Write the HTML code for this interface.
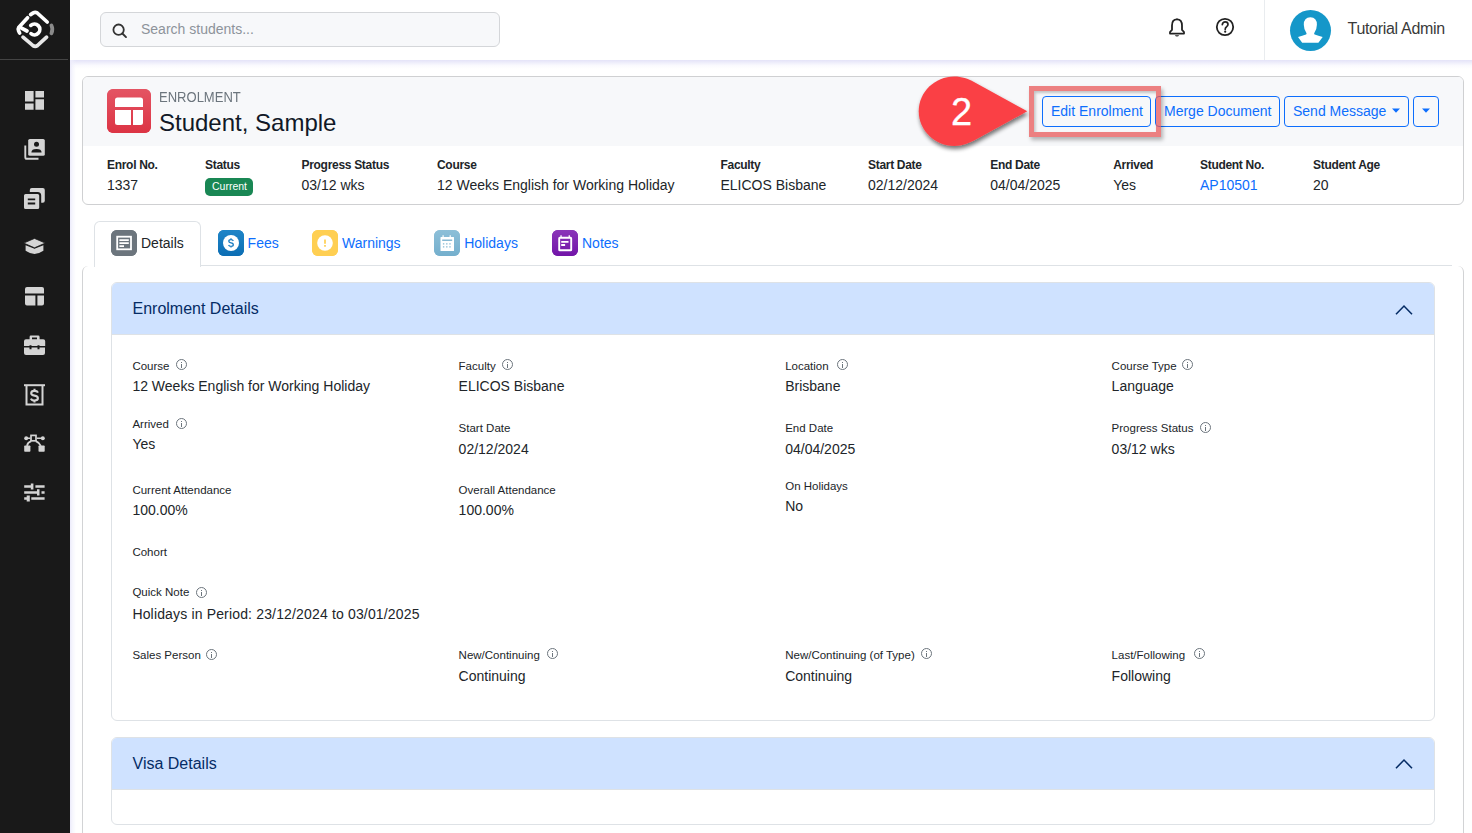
<!DOCTYPE html>
<html><head><meta charset="utf-8">
<style>
*{box-sizing:border-box;margin:0;padding:0}
html,body{width:1472px;height:833px;overflow:hidden;background:#fff;font-family:"Liberation Sans",sans-serif;color:#212529}
.a{position:absolute}
.t{position:absolute;white-space:nowrap;line-height:1}
#side{left:0;top:0;width:70px;height:833px;background:#191919}
#side .line{left:0;top:59px;width:68px;height:1px;background:#444}
#hdr{left:70px;top:0;width:1402px;height:60px;background:#fff}
#hdrshadow{left:70px;top:60px;width:1402px;height:9px;background:linear-gradient(#e4e3f8,rgba(240,240,252,0.35) 60%,rgba(255,255,255,0))}
#leftshadow{left:70px;top:60px;width:6px;height:773px;background:linear-gradient(90deg,#ecebfb,rgba(240,240,252,0.6) 40%,rgba(255,255,255,0))}
#search{left:100px;top:12px;width:400px;height:35px;border:1px solid #d4d6d9;border-radius:6px;background:#f7f8fa}
.card{border:1px solid #cfd0d2;border-radius:6px;background:#fff}
.lbl{font-size:12px;font-weight:700;letter-spacing:-0.3px;color:#212529}
.val{font-size:14px;color:#212529}
.btn{position:absolute;top:96px;height:31px;border:1px solid #0d6efd;border-radius:4px;color:#0d6efd;font-size:14px}
.tabtxt{font-size:14px;color:#0d6efd}
.ico{position:absolute;top:230px;width:26px;height:26px;border-radius:6px}
.dl{font-size:11.5px;color:#212529}
.dv{font-size:14px;color:#212529}
.info{position:absolute;width:11px;height:11px;border:1px solid #6c757d;border-radius:50%}
.info:after{content:"";position:absolute;left:4px;top:4px;width:1px;height:4px;background:#6c757d}
.info:before{content:"";position:absolute;left:4px;top:2px;width:1px;height:1px;background:#6c757d}
.acc{position:absolute;left:111px;width:1324px;border:1px solid #dee2e6;border-radius:6px;overflow:hidden;background:#fff}
.acch{position:absolute;left:0;top:0;width:100%;height:52px;background:#cfe2ff;border-bottom:1px solid #dee2e6}
</style></head><body>

<!-- sidebar -->
<div id="side" class="a"><div class="line a"></div></div>

<!-- header -->
<div id="hdr" class="a"></div>
<div id="hdrshadow" class="a"></div>
<div id="leftshadow" class="a"></div>
<div id="search" class="a"></div>
<div class="t" style="left:141px;top:22.4px;font-size:14px;color:#8d939a">Search students...</div>
<div class="a" style="left:1264px;top:0;width:1px;height:60px;background:#e9ecef"></div>
<div class="a" style="left:1289.6px;top:9.6px;width:41px;height:41px;border-radius:50%;background:#1597c9"></div>
<div class="t" style="left:1347.5px;top:20.6px;font-size:16px;letter-spacing:-0.3px;color:#3a3a3a">Tutorial Admin</div>

<!-- top card -->
<div class="card a" style="left:82px;top:76px;width:1382px;height:129px;overflow:hidden">
  <div class="a" style="left:0;top:0;width:100%;height:69px;background:#f7f8fa"></div>
</div>
<div class="a" style="left:107px;top:89px;width:44px;height:44px;border-radius:7px;background:linear-gradient(#e4505f,#dc3545)"></div>
<div class="t" style="left:159px;top:89.8px;font-size:14.4px;color:#6c757d;transform:scaleX(0.905);transform-origin:0 0">ENROLMENT</div>
<div class="t" style="left:159px;top:110.7px;font-size:24px;color:#111827">Student, Sample</div>

<div class="t lbl" style="left:107px;top:158.8px">Enrol No.</div>
<div class="t lbl" style="left:205px;top:158.8px">Status</div>
<div class="t lbl" style="left:301.5px;top:158.8px">Progress Status</div>
<div class="t lbl" style="left:437px;top:158.8px">Course</div>
<div class="t lbl" style="left:720.5px;top:158.8px">Faculty</div>
<div class="t lbl" style="left:868px;top:158.8px">Start Date</div>
<div class="t lbl" style="left:990.3px;top:158.8px">End Date</div>
<div class="t lbl" style="left:1113.2px;top:158.8px">Arrived</div>
<div class="t lbl" style="left:1200px;top:158.8px">Student No.</div>
<div class="t lbl" style="left:1313px;top:158.8px">Student Age</div>

<div class="t val" style="left:107px;top:178px">1337</div>
<div class="a" style="left:205px;top:178px;width:48px;height:18px;border-radius:5px;background:#198754"></div>
<div class="t" style="left:212px;top:181px;font-size:10.5px;color:#fff">Current</div>
<div class="t val" style="left:301.5px;top:178px">03/12 wks</div>
<div class="t val" style="left:437px;top:178px">12 Weeks English for Working Holiday</div>
<div class="t val" style="left:720.5px;top:178px">ELICOS Bisbane</div>
<div class="t val" style="left:868px;top:178px">02/12/2024</div>
<div class="t val" style="left:990.3px;top:178px">04/04/2025</div>
<div class="t val" style="left:1113.2px;top:178px">Yes</div>
<div class="t val" style="left:1200px;top:178px;color:#0d6efd">AP10501</div>
<div class="t val" style="left:1313px;top:178px">20</div>

<!-- buttons -->
<div class="btn" style="left:1042px;width:109px"></div>
<div class="t" style="left:1051px;top:104px;font-size:14px;color:#0d6efd">Edit Enrolment</div>
<div class="btn" style="left:1155px;width:125px"></div>
<div class="t" style="left:1164px;top:104px;font-size:14px;color:#0d6efd">Merge Document</div>
<div class="btn" style="left:1284px;width:125px"></div>
<div class="t" style="left:1293px;top:104px;font-size:14px;color:#0d6efd">Send Message</div>
<div class="btn" style="left:1413px;width:26px"></div>

<!-- tabs -->
<div class="a" style="left:94px;top:265px;width:1358px;height:1px;background:#dee2e6"></div>
<div class="a" style="left:82px;top:266px;width:1382px;height:600px;border:1px solid #d2d3d5;border-top:none;border-radius:6px"></div>
<div class="a" style="left:94px;top:221px;width:107px;height:46px;border:1px solid #dee2e6;border-bottom:none;border-radius:6px 6px 0 0;background:#fff"></div>
<div class="ico" style="left:111px;background:#6c757d"></div>
<div class="t" style="left:141px;top:236px;font-size:14px;color:#212529">Details</div>
<div class="ico" style="left:218px;background:#0d72b9"></div>
<div class="t tabtxt" style="left:247.6px;top:236px">Fees</div>
<div class="ico" style="left:312px;background:#ffd055"></div>
<div class="t tabtxt" style="left:342px;top:236px">Warnings</div>
<div class="ico" style="left:434px;background:#8bbdd6"></div>
<div class="t tabtxt" style="left:464.2px;top:236px">Holidays</div>
<div class="ico" style="left:552px;background:#7b27b0"></div>
<div class="t tabtxt" style="left:582px;top:236px">Notes</div>

<!-- accordion 1 -->
<div class="acc" style="top:282px;height:439px"><div class="acch"></div></div>
<div class="t" style="left:132.5px;top:300.8px;font-size:16px;color:#052c65">Enrolment Details</div>

<!-- grid -->
<div class="t dl" style="left:132.4px;top:360.67px">Course</div>
<div class="t dv" style="left:132.4px;top:378.95px">12 Weeks English for Working Holiday</div>
<div class="info" style="left:175.5px;top:359px"></div>
<div class="t dl" style="left:132.4px;top:419.07px">Arrived</div>
<div class="t dv" style="left:132.4px;top:437.15px">Yes</div>
<div class="info" style="left:175.5px;top:417.5px"></div>
<div class="t dl" style="left:132.4px;top:484.57px">Current Attendance</div>
<div class="t dv" style="left:132.4px;top:503.15px">100.00%</div>
<div class="t dl" style="left:132.4px;top:546.77px">Cohort</div>
<div class="t dl" style="left:132.4px;top:587.27px">Quick Note</div>
<div class="t dv" style="left:132.4px;top:607.25px;letter-spacing:0.16px">Holidays in Period: 23/12/2024 to 03/01/2025</div>
<div class="info" style="left:195.5px;top:586.5px"></div>
<div class="t dl" style="left:132.4px;top:650.27px">Sales Person</div>
<div class="info" style="left:205.5px;top:648.5px"></div>
<div class="t dl" style="left:458.6px;top:360.67px">Faculty</div>
<div class="t dv" style="left:458.6px;top:378.95px">ELICOS Bisbane</div>
<div class="info" style="left:502px;top:359px"></div>
<div class="t dl" style="left:458.6px;top:423.27px">Start Date</div>
<div class="t dv" style="left:458.6px;top:441.95px">02/12/2024</div>
<div class="t dl" style="left:458.6px;top:484.57px">Overall Attendance</div>
<div class="t dv" style="left:458.6px;top:503.15px">100.00%</div>
<div class="t dl" style="left:458.6px;top:650.27px">New/Continuing</div>
<div class="t dv" style="left:458.6px;top:668.75px">Continuing</div>
<div class="info" style="left:547px;top:648px"></div>
<div class="t dl" style="left:785.2px;top:360.67px">Location</div>
<div class="t dv" style="left:785.2px;top:378.95px">Brisbane</div>
<div class="info" style="left:836.5px;top:359px"></div>
<div class="t dl" style="left:785.2px;top:423.27px">End Date</div>
<div class="t dv" style="left:785.2px;top:441.95px">04/04/2025</div>
<div class="t dl" style="left:785.2px;top:481.27px">On Holidays</div>
<div class="t dv" style="left:785.2px;top:499.35px">No</div>
<div class="t dl" style="left:785.2px;top:650.27px">New/Continuing (of Type)</div>
<div class="t dv" style="left:785.2px;top:668.75px">Continuing</div>
<div class="info" style="left:921px;top:648px"></div>
<div class="t dl" style="left:1111.6px;top:360.67px">Course Type</div>
<div class="t dv" style="left:1111.6px;top:378.95px">Language</div>
<div class="info" style="left:1181.5px;top:359px"></div>
<div class="t dl" style="left:1111.6px;top:423.27px">Progress Status</div>
<div class="t dv" style="left:1111.6px;top:441.95px">03/12 wks</div>
<div class="info" style="left:1199.5px;top:421.5px"></div>
<div class="t dl" style="left:1111.6px;top:650.27px">Last/Following</div>
<div class="t dv" style="left:1111.6px;top:668.75px">Following</div>
<div class="info" style="left:1194px;top:648px"></div>

<!-- accordion 2 -->
<div class="acc" style="top:737px;height:88px"><div class="acch"></div></div>
<div class="t" style="left:132.5px;top:756px;font-size:16px;color:#052c65">Visa Details</div>


<!-- logo -->
<svg class="a" style="left:0;top:0" width="70" height="60" viewBox="0 0 70 60">
 <g fill="none" stroke-linecap="round" stroke-width="3.7">
  <path d="M30.6 14.6 L33.2 12.9 Q35.2 11.8 37.2 12.9 L47.2 22" stroke="#fff"/>
  <path d="M27.6 17.8 L18.8 27.3 Q17.6 29.3 18.6 31 L19.6 33" stroke="#fff"/>
  <path d="M23 37.2 L33 45.6 Q35.2 47.1 37.4 45.6 L46.6 37.2" stroke="#e8e8e8"/>
  <path d="M51.4 25.4 Q53.4 29.4 51.4 33.4" stroke="#8a8a8a"/>
  <path d="M20.6 27.6 L27 31" stroke="#fff"/>
  <path d="M30.8 25.4 A5.4 5.4 0 1 1 31 33.6" stroke="#fff"/>
 </g>
</svg>
<!-- sidebar icons -->
<svg class="a" style="left:0;top:60px" width="70" height="460" viewBox="0 60 70 460" fill="#d4d4d4">
 <!-- dashboard -->
 <path d="M25 91h8.6v10.6H25z M35.4 91h8.6v6.4h-8.6z M25 103.4h8.6v6.4H25z M35.4 99.2h8.6v10.6h-8.6z"/>
 <!-- contacts -->
 <path d="M29.8 139h13.4q1.6 0 1.6 1.6v13.6q0 1.6-1.6 1.6H29.8q-1.6 0-1.6-1.6V140.6q0-1.6 1.6-1.6z" />
 <circle cx="36.5" cy="144.3" r="2.5" fill="#191919"/>
 <path d="M31.4 152.4q0-3.4 5.1-3.4t5.1 3.4z" fill="#191919"/>
 <path d="M25.3 145.6v11.6q0 1.6 1.6 1.6h11.6" fill="none" stroke="#d4d4d4" stroke-width="1.9"/>
 <!-- copy -->
 <rect x="29.8" y="188" width="15" height="14.8" rx="2" fill="#d4d4d4"/>
 <rect x="23" y="193" width="17.2" height="17" rx="2.6" fill="#d4d4d4" stroke="#191919" stroke-width="2"/>
 <path d="M27.8 198.4h7.4v1.8h-7.4z M27.8 202.6h7.4v1.8h-7.4z" fill="#191919"/>
 <!-- grad cap -->
 <path d="M25.6 245.2v5.6q8.9 6.2 17.8 0v-5.6l-8.9 3.6z"/>
 <path d="M34.5 238.4l10.8 4.7-10.8 4.7-10.8-4.7z" stroke="#191919" stroke-width="0.8"/>
 <!-- table -->
 <path d="M27 287h15q2 0 2 2v4.6H25v-4.6q0-2 2-2z M25 295.6h10.4v10H27q-2 0-2-2z M37.4 295.6H44v8q0 2-2 2h-4.6z"/>
 <!-- briefcase -->
 <path d="M30.8 335.5h7.4q1.4 0 1.4 1.4v2.3h3.6q2 0 2 2v4.8H24v-4.8q0-2 2-2h3.6v-2.3q0-1.4 1.2-1.4z M32 337.5v1.7h5v-1.7z" fill-rule="evenodd"/>
 <path d="M24 347.5h21v5.5q0 2-2 2H26q-2 0-2-2z"/>
 <path d="M29.5 345.2h2v4h-2z M37.5 345.2h2v4h-2z" fill="#191919"/>
 <!-- money doc -->
 <path d="M24 384.2h21v2H24z"/>
 <path d="M26.5 386v18.6h16V386" fill="none" stroke="#d4d4d4" stroke-width="2"/>
 <path d="M38 392.6Q37.2 390.9 34.5 390.9 31.2 390.9 31.2 393.3 31.2 395.2 34.5 395.6 37.9 396 37.9 398.3 37.9 400.5 34.5 400.5 31.7 400.5 30.9 398.6 M34.5 388.8v2.2 M34.5 400.4v2.2" fill="none" stroke="#d4d4d4" stroke-width="2.1"/>
 <!-- bezier -->
 <rect x="31" y="435.4" width="5" height="5.4" fill="none" stroke="#d4d4d4" stroke-width="1.7"/>
 <circle cx="26.2" cy="438.2" r="2"/><circle cx="42.8" cy="438.2" r="2"/>
 <path d="M27 438.2h3.2 M36.8 438.2h5" stroke="#d4d4d4" stroke-width="1.6"/>
 <path d="M31.2 441.2q-3.6 1.4-4.2 4.6 M35.8 441.2q3.6 1.4 5 4.6" fill="none" stroke="#d4d4d4" stroke-width="1.8"/>
 <rect x="24.2" y="445.4" width="6.2" height="6.3" rx="0.8"/><rect x="38.5" y="445.4" width="6.2" height="6.3" rx="0.8"/>
 <!-- sliders -->
 <path d="M24.2 485.3h9.2v2.4h-9.2z M35.4 485.3h9.2v2.4h-9.2z M30.8 483.4h2.6v6.1h-2.6z"/>
 <path d="M24.2 491.3h15.3v2.4H24.2z M41.5 491.3h3.1v2.4h-3.1z M37 489.3h2.5v6.1H37z"/>
 <path d="M24.2 497.3h5.6v2.4h-5.6z M31.3 497.3h13.3v2.4H31.3z M26.7 495.4h3.1v6.1h-3.1z"/>
</svg>
<!-- search icon -->
<svg class="a" style="left:110px;top:20px" width="20" height="20" viewBox="0 0 20 20"><circle cx="8.6" cy="9.7" r="5.2" fill="none" stroke="#333" stroke-width="1.8"/><path d="M12.4 13.5l3.6 3.6" stroke="#333" stroke-width="1.9" stroke-linecap="round"/></svg>
<!-- bell -->
<svg class="a" style="left:1165px;top:15px" width="24" height="24" viewBox="0 0 24 24">
 <path d="M12 4.3q5 0 5 6.3v4.2l2 2.2v1.6H5v-1.6l2-2.2v-4.2q0-6.3 5-6.3z" fill="none" stroke="#222" stroke-width="1.8" stroke-linejoin="round"/>
 <path d="M12 3.2l1.2 1.3h-2.4z" fill="#222"/>
 <path d="M9.8 20.3h4.4q-0.8 1.3-2.2 1.3t-2.2-1.3z" fill="#222"/>
</svg>
<!-- help -->
<svg class="a" style="left:1212.5px;top:15.3px" width="24" height="24" viewBox="0 0 24 24">
 <circle cx="12" cy="12" r="8.2" fill="none" stroke="#222" stroke-width="1.8"/>
 <path d="M9.3 9.6q0.4-2.8 2.9-2.8 2.8 0 2.8 2.5 0 1.3-1.4 2.4-1.4 1-1.4 2.6" fill="none" stroke="#222" stroke-width="1.7" stroke-linecap="round"/>
 <circle cx="12.2" cy="16.7" r="1.1" fill="#222"/>
</svg>
<!-- avatar person -->
<svg class="a" style="left:1289.6px;top:9.6px" width="41" height="41" viewBox="0 0 41 41">
 <path d="M20.4 7.2q6.5 0 6.5 7.6 0 4.5-2.6 8.1-0.6 1.1 0.4 1.6 3.6 1.2 8 2.5l-4.3 5.8H12.2l-4.2-5.8q4.4-1.3 8-2.5 1-0.5 0.4-1.6-2.6-3.6-2.6-8.1 0-7.6 6.6-7.6z" fill="#fff"/>
</svg>
<!-- enrolment icon -->
<svg class="a" style="left:107px;top:89px" width="44" height="44" viewBox="0 0 44 44">
 <defs><linearGradient id="rg" x1="0" y1="0" x2="0" y2="1"><stop offset="0" stop-color="#e45463"/><stop offset="1" stop-color="#dc3444"/></linearGradient></defs>
 <rect x="0" y="0" width="44" height="44" rx="6" fill="url(#rg)"/>
 <path d="M10.5 8.5h23q2.5 0 2.5 2.5v7H8v-7q0-2.5 2.5-2.5z M8 21h16v15H10.5Q8 36 8 33.5z M26 21h10v12.5q0 2.5-2.5 2.5H26z" fill="#fff"/>
</svg>
<!-- tab icons -->
<svg class="a" style="left:111px;top:230px" width="26" height="26" viewBox="0 0 26 26">
 <rect width="26" height="26" rx="6" fill="#6c757d"/>
 <rect x="6.2" y="6.7" width="13.8" height="12.6" fill="none" stroke="#fff" stroke-width="1.8"/>
 <path d="M8.4 9.2h9.4v1.9H8.4z M8.4 12.2h9.4v1.9H8.4z M8.4 15.2h4.6v1.9H8.4z" fill="#fff"/>
</svg>
<svg class="a" style="left:218px;top:230px" width="26" height="26" viewBox="0 0 26 26">
 <defs><linearGradient id="bg1" x1="0" y1="0" x2="0" y2="1"><stop offset="0" stop-color="#1f85c8"/><stop offset="1" stop-color="#0b6db3"/></linearGradient></defs>
 <rect width="26" height="26" rx="6" fill="url(#bg1)"/>
 <circle cx="13" cy="13" r="8" fill="#fff"/>
 <path d="M15.3 10.9Q14.8 9.6 13 9.6 10.8 9.6 10.8 11.2 10.8 12.5 13 12.8 15.3 13.1 15.3 14.7 15.3 16.3 13 16.3 11.1 16.3 10.6 15 M13 8.3v1.4 M13 16.2v1.4" fill="none" stroke="#1a7cc0" stroke-width="1.3"/>
</svg>
<svg class="a" style="left:312px;top:230px" width="26" height="26" viewBox="0 0 26 26">
 <rect width="26" height="26" rx="6" fill="#ffcf52"/>
 <circle cx="13" cy="13" r="7.8" fill="#fff"/>
 <path d="M12.15 9.4h1.7v4.4h-1.7z M12.15 15.1h1.7v1.6h-1.7z" fill="#ffcf52"/>
</svg>
<svg class="a" style="left:434px;top:230px" width="26" height="26" viewBox="0 0 26 26">
 <defs><linearGradient id="bg2" x1="0" y1="0" x2="0" y2="1"><stop offset="0" stop-color="#8dbfd8"/><stop offset="1" stop-color="#74afcd"/></linearGradient></defs>
 <rect width="26" height="26" rx="6" fill="url(#bg2)"/>
 <path d="M7 7h12.5q0.5 0 0.5 0.5v13q0 0.5-0.5 0.5H7q-0.5 0-0.5-0.5v-13q0-0.5 0.5-0.5z M8.5 5.2h1.2v2.2H8.5z M15.6 5.2h1.2v2.2h-1.2z" fill="#fff"/>
 <path d="M8.2 9.6h10v1.4h-10z M8.9 13.2h1.4v1.3H8.9z M12.1 13.2h1.4v1.3h-1.4z M15.3 13.2h1.4v1.3h-1.4z M8.9 16.2h1.4v1.3H8.9z M12.1 16.2h1.4v1.3h-1.4z M15.3 16.2h1.4v1.3h-1.4z" fill="#86b9d3"/>
</svg>
<svg class="a" style="left:552px;top:230px" width="26" height="26" viewBox="0 0 26 26">
 <defs><linearGradient id="bg3" x1="0" y1="0" x2="0" y2="1"><stop offset="0" stop-color="#8b36b9"/><stop offset="1" stop-color="#7214a8"/></linearGradient></defs>
 <rect width="26" height="26" rx="6" fill="url(#bg3)"/>
 <rect x="7.2" y="7.8" width="12" height="12.5" rx="0.6" fill="none" stroke="#fff" stroke-width="1.9"/>
 <path d="M8.4 5.2h1.3v2.6H8.4z M16.6 5.2h1.3v2.6h-1.3z" fill="#fff"/>
 <path d="M9.2 10.9h7.3v1.8H9.2z M9.2 14.1h3.9v1.8H9.2z" fill="#fff"/>
</svg>
<!-- chevrons -->
<svg class="a" style="left:1390px;top:297.5px" width="28" height="22" viewBox="0 0 28 22"><path d="M6 16.2l8-8.2 8 8.2" fill="none" stroke="#052c65" stroke-width="1.55"/></svg>
<svg class="a" style="left:1390px;top:752px" width="28" height="22" viewBox="0 0 28 22"><path d="M6 16.2l8-8.2 8 8.2" fill="none" stroke="#052c65" stroke-width="1.55"/></svg>
<!-- carets -->
<svg class="a" style="left:1390px;top:106px" width="12" height="10" viewBox="0 0 12 10"><path d="M2 2.6h8L6 6.8z" fill="#0d6efd"/></svg>
<svg class="a" style="left:1420px;top:106px" width="12" height="10" viewBox="0 0 12 10"><path d="M2 2.6h8L6 6.8z" fill="#0d6efd"/></svg>


<!-- annotation -->
<div class="a" style="left:1029px;top:86px;width:132px;height:51px;border:5px solid rgba(232,86,86,0.74);box-shadow:1.5px 2.5px 4px rgba(0,0,0,0.28), inset 1.5px 2px 3px rgba(0,0,0,0.22)"></div>
<svg class="a" style="left:905px;top:65px;overflow:visible" width="140" height="100" viewBox="905 65 140 100">
 <defs><filter id="sh" x="-20%" y="-20%" width="150%" height="160%"><feGaussianBlur in="SourceAlpha" stdDeviation="2.2"/><feOffset dx="1" dy="3" result="b"/><feComponentTransfer><feFuncA type="linear" slope="0.55"/></feComponentTransfer><feMerge><feMergeNode/><feMergeNode in="SourceGraphic"/></feMerge></filter></defs>
 <path filter="url(#sh)" fill="#fa4145" d="M954.2 76.6 C962 76.6 968 79 974 82 L1027.3 111.3 L974 140.6 C968 143.6 962 146 954.2 146 C935 146 918.7 130.5 918.7 111.3 C918.7 92 935 76.6 954.2 76.6 Z"/>
 <text x="961.6" y="125.1" font-family="Liberation Sans" font-size="38" text-anchor="middle" fill="#fff" stroke="#fff" stroke-width="0.3">2</text>
</svg>

</body></html>
